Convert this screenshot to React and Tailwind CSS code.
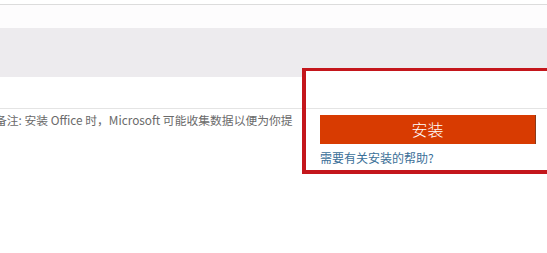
export default function App() {
  const cjk = { fontFamily: '"Noto Sans CJK SC", "Noto Sans", sans-serif' };
  return (
    <div className="w-[547px] h-[253px] bg-white overflow-hidden" style={cjk}>
      <div className="h-[5px] border-b border-[#dcdcdc]" />
      <div className="h-[23px] bg-[#fdfcfd]" />
      <div className="h-[40px] bg-[#edebee]" />
      <div className="flex">
        <div className="w-[302px] shrink-0 overflow-hidden">
          <div className="h-[9px] bg-[#edebee]" />
          <div className="h-[32px] border-b border-[#e4e4e4]" />
          <div className="pt-[3px] -ml-[5px] whitespace-nowrap text-[11.8px] leading-[16px] text-[#6a6a6a]">
            备注: 安装 Office 时，Microsoft 可能收集数据以便为你提
          </div>
        </div>
        <div className="w-[250px] shrink-0 border-t-[3px] border-l-[4px] border-b-[4px] border-[#c4161c] bg-white">
          <div className="h-[38px] border-b border-[#e4e4e4]" />
          <div className="pl-[14px] pr-[16px] pt-[6px] pb-[5px]">
            <button className="w-[216px] h-[29px] bg-[#d83b01] border-r border-[#8a3a1a] text-white text-[16px] font-light leading-[29px] flex items-center justify-center">
              安装
            </button>
            <div className="mt-[7px] text-[12px] leading-[14px] text-[#3b6f98] whitespace-nowrap">
              需要有关安装的帮助?
            </div>
          </div>
        </div>
      </div>
    </div>
  );
}
